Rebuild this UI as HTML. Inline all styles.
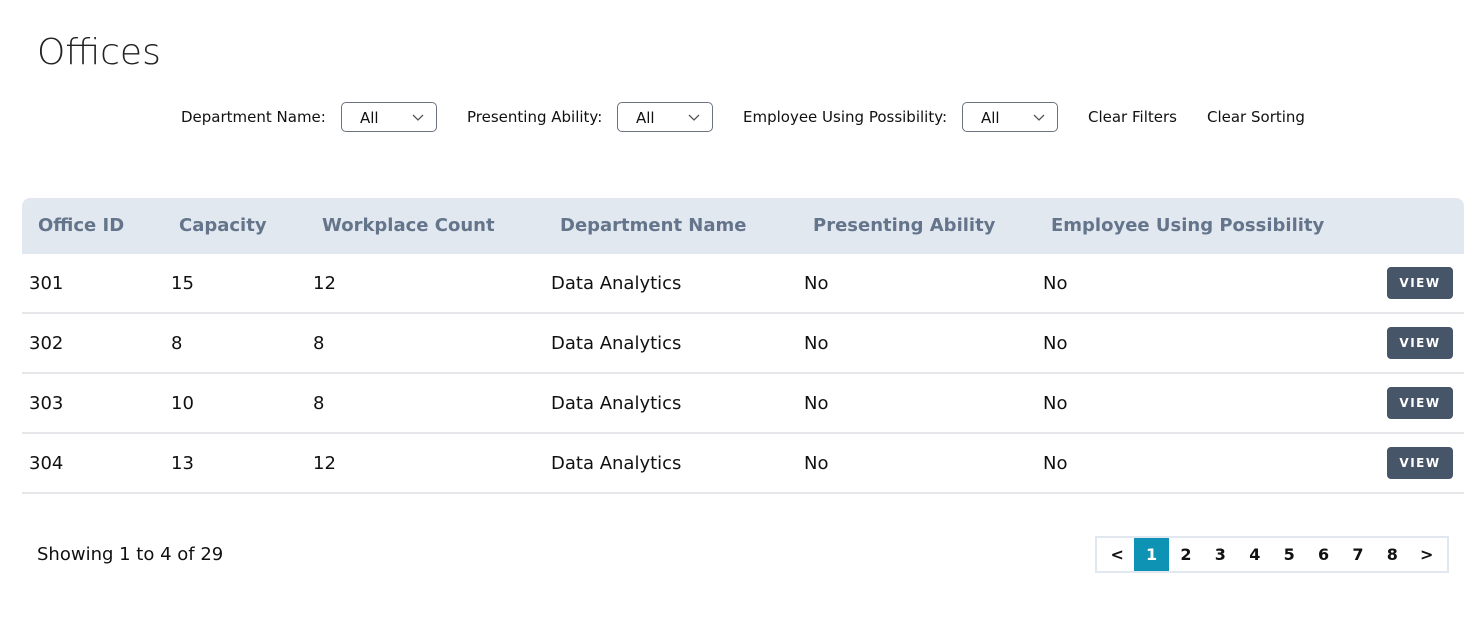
<!DOCTYPE html>
<html><head><style>
*{box-sizing:border-box;margin:0;padding:0}
body{width:1483px;height:619px;background:#fff;font-family:"DejaVu Sans","Liberation Sans",sans-serif;color:#111;position:relative;overflow:hidden}
h1{position:absolute;left:37px;top:32px;font-size:36px;font-weight:200;color:#222;letter-spacing:0}
.lbl{position:absolute;top:108px;font-size:15px;color:#111}
.sel{position:absolute;top:102px;width:96px;height:30px;border:1px solid #6b7280;border-radius:5px;font-size:15px;padding:6px 0 0 18px}
.sel svg{position:absolute;right:12px;top:11px}
.hdr{position:absolute;left:22px;top:198px;width:1442px;height:56px;background:#e2e8f0;border-radius:8px 8px 0 0}
.th{position:absolute;top:215px;font-size:18px;font-weight:bold;color:#64748b}
.row{position:absolute;left:22px;width:1442px;height:60px;border-bottom:2px solid #e5e7eb}
.td{position:absolute;font-size:18px;color:#111;top:19px}
.btn{position:absolute;left:1365px;top:13px;width:66px;height:32px;background:#475569;border-radius:4px;color:#fff;font-size:12px;font-weight:bold;letter-spacing:1.5px;text-align:center;line-height:32px}
.pg{position:absolute;left:1095px;top:536px;width:354px;height:37px;border:2px solid #e2e8f0;display:flex;padding-left:3px}
.pg div{width:34.4px;text-align:center;font-size:16px;font-weight:bold;line-height:33px}
.pg .a{background:#0e93b5;color:#fff}
</style></head><body>
<h1>Offices</h1>
<div class="lbl" style="left:181px">Department Name:</div>
<div class="sel" style="left:341px">All<svg width="12" height="8"><path d="M1 1l5 5 5-5" stroke="#555" fill="none" stroke-width="1.3"/></svg></div>
<div class="lbl" style="left:467px">Presenting Ability:</div>
<div class="sel" style="left:617px">All<svg width="12" height="8"><path d="M1 1l5 5 5-5" stroke="#555" fill="none" stroke-width="1.3"/></svg></div>
<div class="lbl" style="left:743px">Employee Using Possibility:</div>
<div class="sel" style="left:962px">All<svg width="12" height="8"><path d="M1 1l5 5 5-5" stroke="#555" fill="none" stroke-width="1.3"/></svg></div>
<div class="lbl" style="left:1088px">Clear Filters</div>
<div class="lbl" style="left:1207px">Clear Sorting</div>

<div class="hdr"></div>
<div class="th" style="left:38px">Office ID</div>
<div class="th" style="left:179px">Capacity</div>
<div class="th" style="left:322px">Workplace Count</div>
<div class="th" style="left:560px">Department Name</div>
<div class="th" style="left:813px">Presenting Ability</div>
<div class="th" style="left:1051px">Employee Using Possibility</div>

<div class="row" style="top:254px"><div class="td" style="left:7px">301</div><div class="td" style="left:149px">15</div><div class="td" style="left:291px">12</div><div class="td" style="left:529px">Data Analytics</div><div class="td" style="left:782px">No</div><div class="td" style="left:1021px">No</div><div class="btn">VIEW</div></div>
<div class="row" style="top:314px"><div class="td" style="left:7px">302</div><div class="td" style="left:149px">8</div><div class="td" style="left:291px">8</div><div class="td" style="left:529px">Data Analytics</div><div class="td" style="left:782px">No</div><div class="td" style="left:1021px">No</div><div class="btn">VIEW</div></div>
<div class="row" style="top:374px"><div class="td" style="left:7px">303</div><div class="td" style="left:149px">10</div><div class="td" style="left:291px">8</div><div class="td" style="left:529px">Data Analytics</div><div class="td" style="left:782px">No</div><div class="td" style="left:1021px">No</div><div class="btn">VIEW</div></div>
<div class="row" style="top:434px"><div class="td" style="left:7px">304</div><div class="td" style="left:149px">13</div><div class="td" style="left:291px">12</div><div class="td" style="left:529px">Data Analytics</div><div class="td" style="left:782px">No</div><div class="td" style="left:1021px">No</div><div class="btn">VIEW</div></div>

<div class="td" style="left:37px;top:544px">Showing 1 to 4 of 29</div>
<div class="pg"><div>&lt;</div><div class="a">1</div><div>2</div><div>3</div><div>4</div><div>5</div><div>6</div><div>7</div><div>8</div><div>&gt;</div></div>
</body></html>
